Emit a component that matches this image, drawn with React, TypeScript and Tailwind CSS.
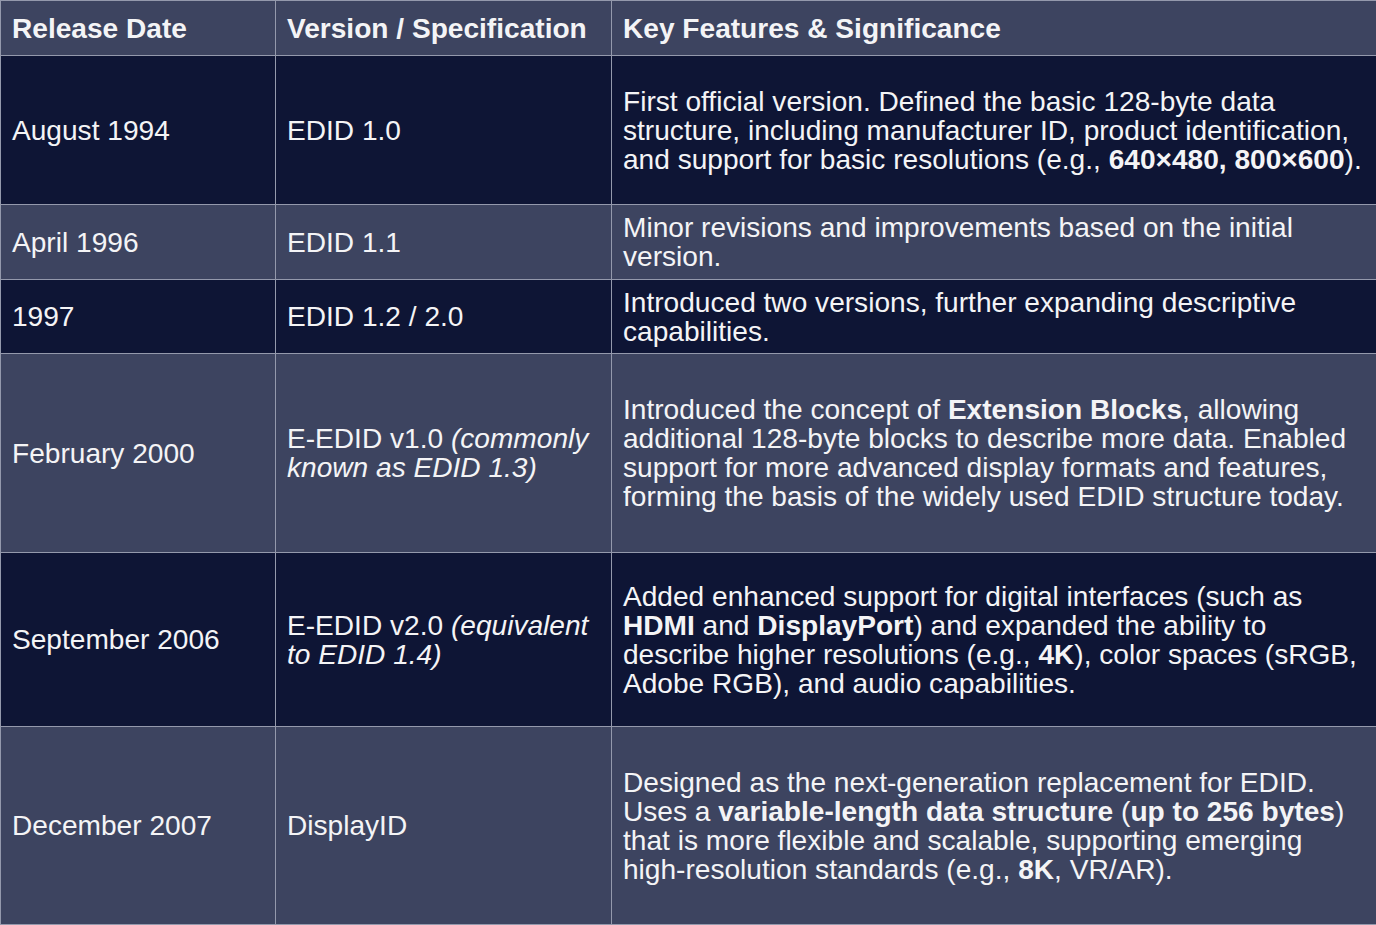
import React from "react";

const light = "bg-[#3d4460]";
const dark = "bg-[#0e1535]";

type Row = { h: string; bg: string; date: string; ver: React.ReactNode; feat: React.ReactNode };

const rows: Row[] = [
  {
    h: "h-[149px]",
    bg: dark,
    date: "August 1994",
    ver: "EDID 1.0",
    feat: (
      <>
        First official version. Defined the basic 128-byte data structure, including manufacturer ID, product
        identification, and support for basic resolutions (e.g., <b>640×480, 800×600</b>).
      </>
    ),
  },
  {
    h: "h-[75px]",
    bg: light,
    date: "April 1996",
    ver: "EDID 1.1",
    feat: <>Minor revisions and improvements based on the initial version.</>,
  },
  {
    h: "h-[74px]",
    bg: dark,
    date: "1997",
    ver: "EDID 1.2 / 2.0",
    feat: <>Introduced two versions, further expanding descriptive capabilities.</>,
  },
  {
    h: "h-[199px]",
    bg: light,
    date: "February 2000",
    ver: (
      <>
        E-EDID v1.0 <i>(commonly known as EDID 1.3)</i>
      </>
    ),
    feat: (
      <>
        Introduced the concept of <b>Extension Blocks</b>, allowing additional 128-byte blocks to describe more
        data. Enabled support for more advanced display formats and features, forming the basis of the widely used
        EDID structure today.
      </>
    ),
  },
  {
    h: "h-[174px]",
    bg: dark,
    date: "September 2006",
    ver: (
      <>
        E-EDID v2.0 <i>(equivalent to EDID 1.4)</i>
      </>
    ),
    feat: (
      <>
        Added enhanced support for digital interfaces (such as <b>HDMI</b> and <b>DisplayPort</b>) and expanded
        the ability to describe higher resolutions (e.g., <b>4K</b>), color spaces (sRGB, Adobe RGB), and audio
        capabilities.
      </>
    ),
  },
  {
    h: "h-[198px]",
    bg: light,
    date: "December 2007",
    ver: "DisplayID",
    feat: (
      <>
        Designed as the next-generation replacement for EDID. Uses a <b>variable-length data structure</b> (
        <b>up to 256 bytes</b>) that is more flexible and scalable, supporting emerging{" "}
        <span className="whitespace-nowrap">high-resolution</span> standards (e.g., <b>8K</b>, VR/AR).
      </>
    ),
  },
];

const cell = "border border-[#9499ac] pl-[11px] pr-[10px] align-middle";

export default function App() {
  return (
    <div
      className="w-[1376px] h-[925px] overflow-hidden bg-[#3d4460] text-[#f4f4f6] text-[28.1px] leading-[29px]"
      style={{ fontFamily: '"Liberation Sans", Arial, sans-serif' }}
    >
      <table className="table-fixed border-collapse w-[1376px]">
        <colgroup>
          <col className="w-[275px]" />
          <col className="w-[336px]" />
          <col className="w-[765px]" />
        </colgroup>
        <thead>
          <tr className={`h-[55px] ${light}`}>
            <th className={`${cell} text-left font-bold`}>Release Date</th>
            <th className={`${cell} text-left font-bold`}>Version / Specification</th>
            <th className={`${cell} text-left font-bold`}>Key Features &amp; Significance</th>
          </tr>
        </thead>
        <tbody>
          {rows.map((r, i) => (
            <tr key={i} className={`${r.h} ${r.bg}`}>
              <td className={cell}>{r.date}</td>
              <td className={cell}>{r.ver}</td>
              <td className={cell}>{r.feat}</td>
            </tr>
          ))}
        </tbody>
      </table>
    </div>
  );
}
